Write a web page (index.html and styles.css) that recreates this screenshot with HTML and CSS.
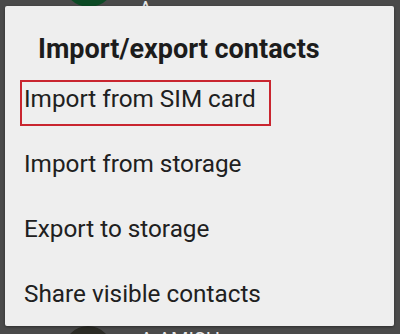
FILE: index.html
```
<html>
	<head>
		<link rel="stylesheet" href="styles.css">
	</head>
<body>

	<div class="contacts">
		<div class="contact top">
			<div class="avatar green"><span>A</span></div>
			<span class="name">A</span>
		</div>
		<div class="contact bottom">
			<div class="avatar photo"></div>
			<span class="name">A AMISH</span>
		</div>
	</div>

	<div class="dialog">
		<div class="dialog-title">Import/export contacts</div>
		<div class="menu">
			<div class="menu-item"><span class="marked">Import from SIM card</span></div>
			<div class="menu-item">Import from storage</div>
			<div class="menu-item">Export to storage</div>
			<div class="menu-item">Share visible contacts</div>
		</div>
	</div>

</body>
</html>
```

FILE: styles.css
```
	body {
		margin: 0;
		width: 400px;
		height: 334px;
		overflow: hidden;
		background: #4a4a4a;
		font-family: Roboto, "Noto Sans", sans-serif;
		position: relative;
	}

/* contact list behind the dialog */
	.contacts {
		height: 334px;
		display: flex;
		flex-direction: column;
		justify-content: space-between;
	}
	.contact {
		display: flex;
		overflow: hidden;
	}
	.contact.top {
		height: 7px;
		align-items: flex-end;
	}
	.contact.bottom {
		height: 8px;
		align-items: flex-start;
	}
	.avatar {
		flex: none;
		width: 52px;
		height: 52px;
		border-radius: 50%;
		margin-left: 63px;
		display: flex;
		align-items: center;
		justify-content: center;
	}
	.avatar.green {background: #0c4a25}
	.avatar.green span {
		color: #7f9e89;
		font-size: 34px;
	}
	.avatar.photo {
		background: #2b2b25;
		width: 48px;
		height: 48px;
		margin-left: 64px;
		margin-right: 4px;
	}
	.name {
		flex: none;
		margin-left: 24px;
		color: #e8e8e8;
		font-size: 20px;
	}
	.top .name {margin-bottom: -14px}
	.bottom .name {margin-top: 2px}

/* dialog */
	.dialog {
		position: absolute;
		left: 5px;
		top: 6px;
		width: 389px;
		height: 320px;
		background: #eeeeee;
		border-radius: 2px;
		box-shadow: 0 1px 3px rgba(0, 0, 0, 0.4);
		padding-top: 28px;
		box-sizing: border-box;
	}
	.dialog-title {
		padding-left: 33px;
		font-size: 27px;
		line-height: 30px;
		font-weight: 700;
		color: #1c1c1c;
	}
	.menu {
		margin-top: 2px;
	}
	.menu-item {
		display: flex;
		align-items: center;
		height: 65px;
		padding-left: 19px;
		font-size: 24.3px;
		color: #202020;
	}
	.marked {
		align-self: flex-start;
		margin-top: 14px;
		margin-left: -4px;
		line-height: 28px;
		padding: 3px 13px 11px 2px;
		border: 2px solid #c9252f;
	}
```
